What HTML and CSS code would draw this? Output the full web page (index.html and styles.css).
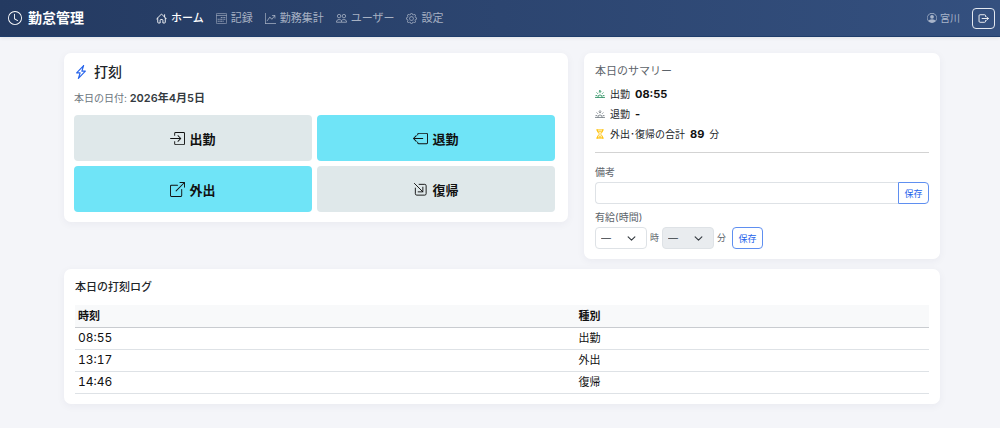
FILE: index.html
```html
<!DOCTYPE html>
<html lang="ja">
<head>
  <meta charset="UTF-8" />
  <meta name="viewport" content="width=device-width, initial-scale=1.0" />
  <title>勤怠管理</title>
  <link rel="stylesheet" href="styles.css">
</head>
<body>

  <header class="navbar">
    <a class="brand" href="#">
      <svg class="icon icon-brand" viewBox="0 0 16 16"><path d="M8 3.5a.5.5 0 0 0-1 0V9a.5.5 0 0 0 .252.434l3.5 2a.5.5 0 0 0 .496-.868L8 8.71z"/><path d="M8 16A8 8 0 1 0 8 0a8 8 0 0 0 0 16m7-8A7 7 0 1 1 1 8a7 7 0 0 1 14 0"/></svg>
      勤怠管理
    </a>
    <nav class="menu">
      <a class="active" href="#">
        <svg class="icon" viewBox="0 0 16 16" fill="none" stroke="currentColor" stroke-width="1.3" stroke-linecap="round" stroke-linejoin="round"><path d="M1 8.500 8 1.500l7 7M2.500 7.500v6a1 1 0 0 0 1 1h2.500v-4a1 1 0 0 1 1-1h2a1 1 0 0 1 1 1v4h2.500a1 1 0 0 0 1-1v-6M12.500 5.500v-3"/></svg>
        ホーム
      </a>
      <a href="#">
        <svg class="icon" viewBox="0 0 16 16" fill="none" stroke="currentColor"><rect x=".5" y=".5" width="15" height="15" rx="1.500"/><path d="M.5 3.500h15"/><path d="M7 6.500h1.500M9.500 6.500H11M12 6.500h1.500M2.500 9H4M5 9h1.500M7 9h1.500M9.500 9H11M12 9h1.500M2.500 12H4M5 12h1.500M7 12h1.500M9.500 12H11" stroke-width="1.500"/></svg>
        記録
      </a>
      <a href="#">
        <svg class="icon" viewBox="0 0 16 16"><path fill-rule="evenodd" d="M0 0h1v15h15v1H0zm10 3.500a.5.5 0 0 1 .5-.5h4a.5.5 0 0 1 .5.5v4a.5.5 0 0 1-1 0V4.900l-3.613 4.417a.5.5 0 0 1-.74.037L7.060 6.767l-3.656 5.027a.5.5 0 0 1-.808-.588l4-5.500a.5.5 0 0 1 .758-.060l2.609 2.610L13.445 4H10.500a.5.5 0 0 1-.5-.5"/></svg>
        勤務集計
      </a>
      <a href="#">
        <svg class="icon" viewBox="0 0 16 16" fill="none" stroke="currentColor" stroke-width="1.200"><circle cx="4.500" cy="4.500" r="2.500"/><circle cx="11.500" cy="4.500" r="2.500"/><path d="M.6 13.400c0-2.500 1.600-3.900 4-3.900 1.500 0 2.700.5 3.400 1.500.7-1 1.900-1.500 3.400-1.500 2.400 0 4 1.400 4 3.900zM8 11v2"/></svg>
        ユーザー
      </a>
      <a href="#">
        <svg class="icon" viewBox="0 0 16 16"><path d="M8 4.754a3.246 3.246 0 1 0 0 6.492 3.246 3.246 0 0 0 0-6.492M5.754 8a2.246 2.246 0 1 1 4.492 0 2.246 2.246 0 0 1-4.492 0"/><path d="M9.796 1.343c-.527-1.790-3.065-1.790-3.592 0l-.094.319a.873.873 0 0 1-1.255.520l-.292-.160c-1.640-.892-3.433.902-2.540 2.541l.159.292a.873.873 0 0 1-.520 1.255l-.319.094c-1.790.527-1.790 3.065 0 3.592l.319.094a.873.873 0 0 1 .520 1.255l-.160.292c-.892 1.640.901 3.434 2.541 2.540l.292-.159a.873.873 0 0 1 1.255.520l.094.319c.527 1.790 3.065 1.790 3.592 0l.094-.319a.873.873 0 0 1 1.255-.520l.292.160c1.640.893 3.434-.902 2.540-2.541l-.159-.292a.873.873 0 0 1 .520-1.255l.319-.094c1.790-.527 1.790-3.065 0-3.592l-.319-.094a.873.873 0 0 1-.520-1.255l.160-.292c.893-1.640-.902-3.433-2.541-2.540l-.292.159a.873.873 0 0 1-1.255-.520zm-2.633.283c.246-.835 1.428-.835 1.674 0l.094.319a1.873 1.873 0 0 0 2.693 1.115l.291-.160c.764-.415 1.600.420 1.184 1.185l-.159.292a1.873 1.873 0 0 0 1.116 2.692l.318.094c.835.246.835 1.428 0 1.674l-.319.094a1.873 1.873 0 0 0-1.115 2.693l.160.291c.415.764-.420 1.600-1.185 1.184l-.291-.159a1.873 1.873 0 0 0-2.693 1.116l-.094.318c-.246.835-1.428.835-1.674 0l-.094-.319a1.873 1.873 0 0 0-2.692-1.115l-.292.160c-.764.415-1.600-.420-1.184-1.185l.159-.291A1.873 1.873 0 0 0 1.945 8.930l-.319-.094c-.835-.246-.835-1.428 0-1.674l.319-.094A1.873 1.873 0 0 0 3.060 4.377l-.160-.292c-.415-.764.420-1.600 1.185-1.184l.292.159a1.873 1.873 0 0 0 2.692-1.115z"/></svg>
        設定
      </a>
    </nav>
    <div class="account">
      <span class="user">
        <svg class="icon" viewBox="0 0 16 16"><path d="M11 6a3 3 0 1 1-6 0 3 3 0 0 1 6 0"/><path fill-rule="evenodd" d="M0 8a8 8 0 1 1 16 0A8 8 0 0 1 0 8m8-7a7 7 0 0 0-5.468 11.370C3.242 11.226 4.805 10 8 10s4.757 1.225 5.468 2.370A7 7 0 0 0 8 1"/></svg>
        宮川
      </span>
      <button class="logout" type="button" aria-label="ログアウト">
        <svg class="icon" viewBox="0 0 16 16" fill="none" stroke="currentColor" stroke-width="1.300" stroke-linecap="round" stroke-linejoin="round"><path d="M11 5V4a1.500 1.500 0 0 0-1.500-1.500H3A1.500 1.500 0 0 0 1.500 4v8A1.500 1.500 0 0 0 3 13.500h6.500A1.500 1.500 0 0 0 11 12v-1M6 8h9M12.500 5.500 15 8l-2.500 2.500"/></svg>
      </button>
    </div>
  </header>

  <main class="container">
    <section class="card punch">
      <h1>
        <svg class="icon icon-bolt" viewBox="0 0 16 16" fill="none" stroke="currentColor" stroke-width="1.300" stroke-linejoin="round"><path d="M11 .6 3 9h4l-2 6.400L13 7H9z"/></svg>
        打刻
      </h1>
      <p class="date">本日の日付: <strong>2026年4月5日</strong></p>
      <div class="punch-buttons">
        <button type="button">
          <svg class="icon" viewBox="0 0 16 16"><path fill-rule="evenodd" d="M4.500 5V2.500A1.500 1.500 0 0 1 6 1h8.500A1.500 1.500 0 0 1 16 2.500v11a1.500 1.500 0 0 1-1.500 1.500H6a1.500 1.500 0 0 1-1.500-1.500V11h1v2.500a.5.5 0 0 0 .5.5h8.500a.5.5 0 0 0 .5-.5v-11a.5.5 0 0 0-.5-.5H6a.5.5 0 0 0-.5.5V5zM11.854 8.354a.5.5 0 0 0 0-.708l-3-3a.5.5 0 1 0-.708.708L10.293 7.500H.5a.5.5 0 0 0 0 1h9.793l-2.147 2.146a.5.5 0 0 0 .708.708z"/></svg>
          出勤
        </button>
        <button class="on" type="button">
          <svg class="icon" viewBox="0 0 16 16"><path fill-rule="evenodd" d="M4.500 4.500v-1A1.500 1.500 0 0 1 6 2h8.500A1.500 1.500 0 0 1 16 3.500v9a1.500 1.500 0 0 1-1.500 1.500H6a1.500 1.500 0 0 1-1.500-1.500v-1h1v1a.5.5 0 0 0 .5.5h8.500a.5.5 0 0 0 .5-.5v-9a.5.5 0 0 0-.5-.5H6a.5.5 0 0 0-.5.5v1zM.146 8.354a.5.5 0 0 1 0-.708l3-3a.5.5 0 1 1 .708.708L1.707 7.500H10.500a.5.5 0 0 1 0 1H1.707l2.147 2.146a.5.5 0 0 1-.708.708z"/></svg>
          退勤
        </button>
        <button class="on" type="button">
          <svg class="icon" viewBox="0 0 16 16"><path fill-rule="evenodd" d="M8.636 3.500a.5.5 0 0 0-.5-.5H1.500A1.500 1.500 0 0 0 0 4.500v10A1.500 1.500 0 0 0 1.500 16h10a1.500 1.500 0 0 0 1.500-1.500V7.864a.5.5 0 0 0-1 0V14.500a.5.5 0 0 1-.5.5h-10a.5.5 0 0 1-.5-.5v-10a.5.5 0 0 1 .5-.5h6.636a.5.5 0 0 0 .5-.5"/><path fill-rule="evenodd" d="M16 .5a.5.5 0 0 0-.5-.5h-5a.5.5 0 0 0 0 1h3.793L6.146 9.146a.5.5 0 1 0 .708.708L15 1.707V5.500a.5.5 0 0 0 1 0z"/></svg>
          外出
        </button>
        <button type="button">
          <svg class="icon" viewBox="0 0 16 16" fill="none" stroke="currentColor" stroke-linecap="round" stroke-linejoin="round"><path d="M6.500 2.500h6A1.500 1.500 0 0 1 14 4v8.500a1.500 1.500 0 0 1-1.500 1.500H4a1.500 1.500 0 0 1-1.500-1.500v-6M1.500 1.500l9 9M5.500 10.500h5v-5"/></svg>
          復帰
        </button>
      </div>
    </section>

    <section class="card summary">
      <h2>本日のサマリー</h2>
      <ul>
        <li>
          <svg class="icon green" viewBox="0 0 16 16" fill="none" stroke="currentColor" stroke-width="1.300" stroke-linecap="round"><path d="M.7 13.500h14.600M1.500 10.500H3M13 10.500h1.500M4.500 13a3.500 3.500 0 0 1 7 0M8 2.500V6M6.500 4 8 2.500 9.500 4M3 6l1.200 1.200M13 6l-1.200 1.200"/></svg>
          出勤 <strong>08:55</strong>
        </li>
        <li>
          <svg class="icon gray" viewBox="0 0 16 16" fill="none" stroke="currentColor" stroke-width="1.300" stroke-linecap="round"><path d="M.7 13.500h14.600M1.500 10.500H3M13 10.500h1.500M4.500 13a3.500 3.500 0 0 1 7 0M8 2.500V6M6.500 4.500 8 6l1.500-1.500M3 6l1.200 1.200M13 6l-1.200 1.200"/></svg>
          退勤 <strong>-</strong>
        </li>
        <li>
          <svg class="icon yellow" viewBox="0 0 16 16" fill="none" stroke="currentColor" stroke-width="1.600" stroke-linecap="round" stroke-linejoin="round"><path d="M2.500 1.500h11M2.500 14.500h11M4 1.500V3c0 3 3 3.500 3 5s-3 2-3 5v1.500M12 1.500V3c0 3-3 3.500-3 5s3 2 3 5v1.500M5.500 4.500h5M8 11v1M6 13h4"/></svg>
          外出･復帰の合計 <strong>89</strong> 分
        </li>
      </ul>
      <hr>
      <form class="note">
        <label for="note">備考</label>
        <div class="input-group">
          <input type="text" id="note">
          <button class="save" type="button">保存</button>
        </div>
      </form>
      <form class="leave">
        <label for="leaveHour">有給(時間)</label>
        <div class="leave-row">
          <select id="leaveHour"><option>—</option></select>
          <span>時</span>
          <select id="leaveMinute" aria-label="分" disabled><option>—</option></select>
          <span>分</span>
          <button class="save" type="button">保存</button>
        </div>
      </form>
    </section>

    <section class="card log">
      <h2>本日の打刻ログ</h2>
      <table>
        <thead>
          <tr><th class="time">時刻</th><th>種別</th></tr>
        </thead>
        <tbody>
          <tr><td class="time">08:55</td><td>出勤</td></tr>
          <tr><td class="time">13:17</td><td>外出</td></tr>
          <tr><td class="time">14:46</td><td>復帰</td></tr>
        </tbody>
      </table>
    </section>
  </main>

</body>
</html>
```

FILE: styles.css
```css
* {
  box-sizing: border-box;
}

body {
  margin: 0;
  background: #f4f5f9;
  color: #212529;
  font-family: Inter, "Noto Sans CJK JP", sans-serif;
  font-size: 11px;
  line-height: 16px;
}

h1, h2, p, ul {
  margin: 0;
  padding: 0;
}

button, input, select {
  font-family: inherit;
  font-size: 10px;
}

button {
  cursor: pointer;
}

.icon {
  width: 11px;
  height: 11px;
  flex: none;
}

.icon:not([fill]) {
  fill: currentColor;
}

/* navbar */
.navbar {
  display: flex;
  align-items: center;
  height: 37px;
  padding: 0 5px 0 8px;
  background: linear-gradient(to right, #243a61, #34507f);
  border-bottom: 1px solid #1f3d6b;
  box-shadow: 0 1px 4px rgba(0, 0, 0, 0.08);
}

.navbar a {
  display: flex;
  align-items: center;
  text-decoration: none;
}

.brand {
  gap: 6px;
  color: #fff;
  font-size: 14px;
  font-weight: bold;
}

.icon-brand {
  width: 14px;
  height: 14px;
}

.menu {
  display: flex;
  gap: 12px;
  margin-left: 72px;
}

.menu a {
  gap: 4px;
  color: #a7b1c3;
}

.menu a.active {
  color: #fff;
  font-weight: 500;
}

.account {
  display: flex;
  align-items: center;
  gap: 12px;
  margin-left: auto;
}

.user {
  display: flex;
  align-items: center;
  gap: 3px;
  color: #a9b5ca;
  font-size: 10px;
}

.user .icon {
  width: 10px;
  height: 10px;
}

.logout {
  display: flex;
  align-items: center;
  justify-content: center;
  width: 23px;
  height: 21px;
  padding: 0;
  border: 1px solid #e3e8f0;
  border-radius: 4px;
  background: none;
  color: #fff;
}

/* cards */
.container {
  display: grid;
  grid-template-columns: 504fr 356fr;
  align-items: start;
  gap: 10px 16px;
  padding: 16px 60px 24px 64px;
}

.card {
  padding: 10px 11px;
  background: #fff;
  border-radius: 7px;
  box-shadow: 0 2px 8px rgba(30, 40, 80, 0.05);
}

.punch {
  padding: 9px 13px 10px 10px;
}

.punch h1 {
  display: flex;
  align-items: center;
  gap: 6px;
  font-size: 14px;
  font-weight: 500;
  line-height: 20px;
}

.icon-bolt {
  width: 14px;
  height: 14px;
  color: #2563eb;
}

.date {
  margin: 8px 0 9px;
  color: #6c757d;
  font-size: 10px;
}

.date strong {
  color: #343a40;
  font-size: 11px;
  font-weight: 600;
}

.punch-buttons {
  display: grid;
  grid-template-columns: 1fr 1fr;
  gap: 5px;
}

.punch-buttons button {
  display: flex;
  align-items: center;
  justify-content: center;
  gap: 4px;
  height: 46px;
  border: none;
  border-radius: 4px;
  background: #dfe8ea;
  color: #111;
  font-size: 13px;
  font-weight: bold;
}

.punch-buttons .on {
  background: #6fe4f7;
}

.punch-buttons .icon {
  width: 15px;
  height: 15px;
}

.summary h2 {
  color: #5c636a;
  font-size: 11px;
  font-weight: normal;
}

.summary ul {
  display: grid;
  gap: 4px;
  margin-top: 7px;
  list-style: none;
}

.summary li {
  display: flex;
  align-items: center;
  gap: 5px;
  font-size: 10px;
}

.summary strong {
  color: #111;
  font-size: 11px;
}

.summary .icon {
  width: 10px;
  height: 10px;
}

.green { color: #198754; }
.gray { color: #6c757d; }
.yellow { color: #ffc107; }

hr {
  margin: 10px 0 11px;
  border: none;
  border-top: 1px solid #d3d3d3;
}

label {
  display: block;
  margin-bottom: 2px;
  color: #5c636a;
  font-size: 10px;
}

.input-group {
  display: flex;
  margin-bottom: 5px;
}

.input-group input {
  flex: 1;
  min-width: 0;
  border: 1px solid #dee2e6;
  border-right: none;
  border-radius: 4px 0 0 4px;
}

.input-group .save {
  border-radius: 0 4px 4px 0;
}

.save {
  width: 31px;
  height: 22px;
  padding: 0;
  border: 1px solid #5f8ff0;
  border-radius: 4px;
  background: #fff;
  color: #2563eb;
  font-size: 9px;
}

.leave-row {
  display: flex;
  align-items: center;
  gap: 3px;
  color: #5c636a;
  font-size: 9px;
}

.leave-row .save {
  margin-left: 3px;
}

select {
  width: 52px;
  height: 22px;
  padding: 0 5px;
  appearance: none;
  border: 1px solid #dee2e6;
  border-radius: 4px;
  background: #fff url("data:image/svg+xml,%3Csvg xmlns='http://www.w3.org/2000/svg' viewBox='0 0 16 16'%3E%3Cpath fill='none' stroke='%23343a40' stroke-linecap='round' stroke-linejoin='round' stroke-width='2' d='m2 5 6 6 6-6'/%3E%3C/svg%3E") no-repeat right 10px center / 9px;
  color: #343a40;
}

select:disabled {
  background-color: #e9ecef;
  color: #343a40;
  opacity: 1;
}

/* log table */
.log {
  grid-column: 1 / -1;
}

.log h2 {
  margin-bottom: 10px;
  font-size: 11px;
  font-weight: 500;
}

table {
  width: 100%;
  border-collapse: collapse;
  table-layout: fixed;
  color: #111;
}

th, td {
  height: 22px;
  padding: 0 3px;
  border-bottom: 1px solid #dee2e6;
  text-align: left;
}

th {
  background: #f8f9fa;
  border-color: #c9ccd0;
}

th.time {
  width: 58.6%;
}

td.time {
  font-size: 12px;
  font-variant-numeric: tabular-nums;
}
```
